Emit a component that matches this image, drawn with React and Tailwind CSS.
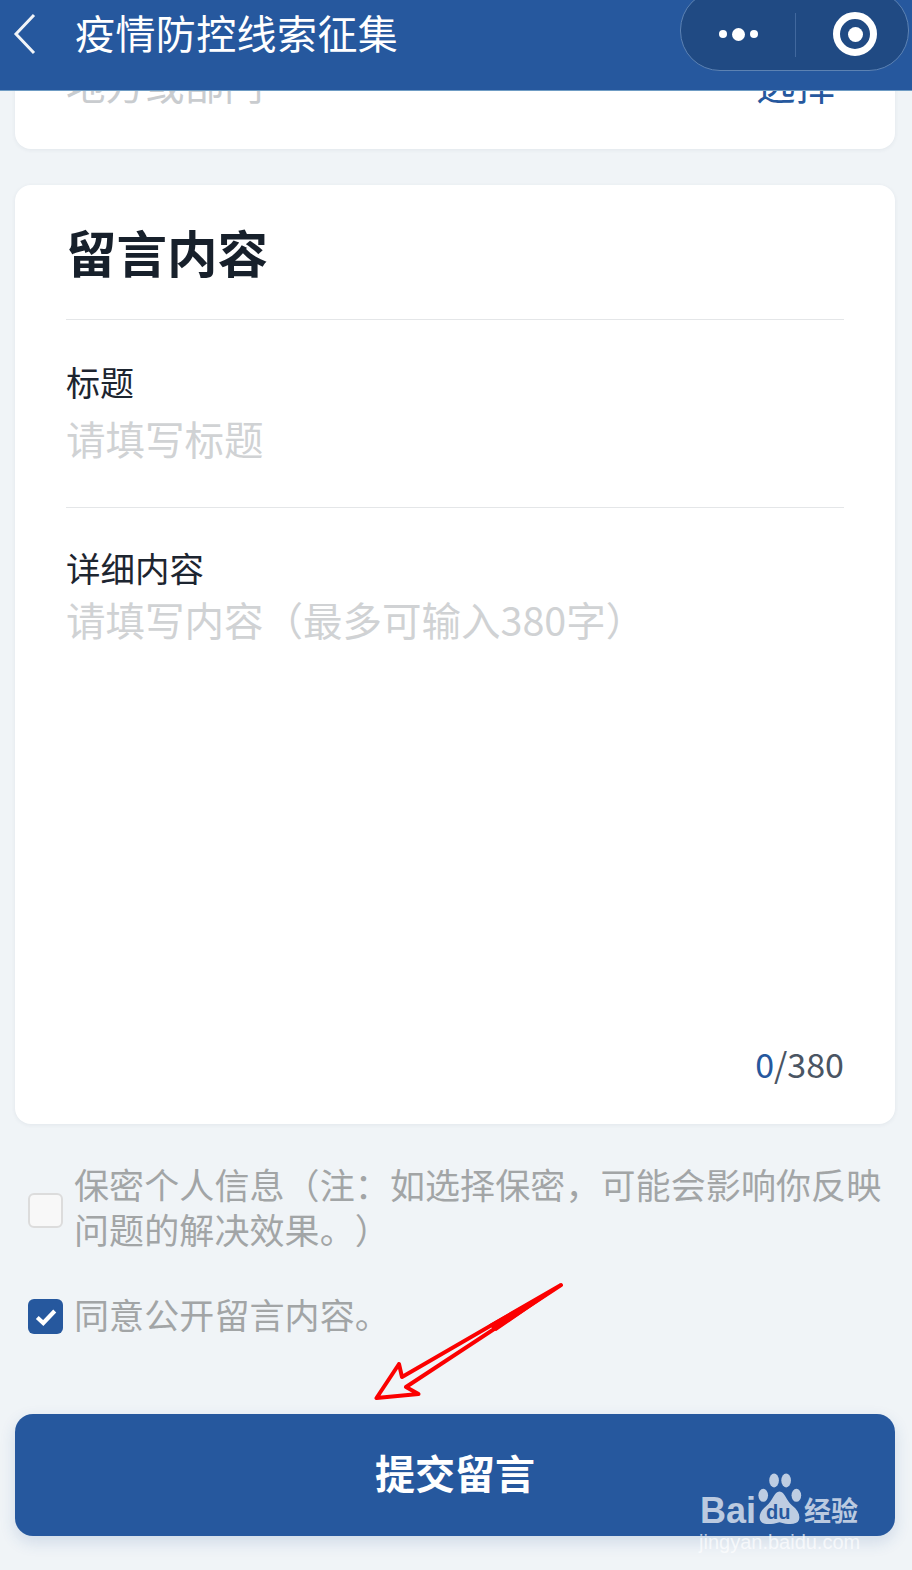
const App = () => {
  return (
    <div className="relative w-[912px] h-[1570px] overflow-hidden bg-[#f0f4f7] font-['Noto_Sans_CJK_SC','Noto_Sans',sans-serif] [text-spacing-trim:space-all]">
      {/* 顶部导航 */}
      <header className="relative z-10 h-[91px] bg-[#26589e] border-b border-[#6f9cc4] flex items-start text-white">
        <svg className="mt-[13px] ml-[12px] w-[26px] h-[42px]" viewBox="0 0 26 42" fill="none">
          <path d="M22 2 L4 21 L22 40" stroke="#f1f4f8" strokeWidth="3" />
        </svg>
        <h1 className="ml-[37px] mt-[2px] text-[40px] leading-[60px] tracking-[0.4px] whitespace-nowrap">疫情防控线索征集</h1>
        <div className="absolute left-[680px] top-[-10px] w-[229px] h-[81px] rounded-[40px] bg-[#204a83] border border-[#5c82b3] flex items-center pt-[10px]">
          <div className="w-[114px] flex items-center justify-center gap-[5px] pl-[1px] -mt-[3px]">
            <span className="w-[8px] h-[8px] rounded-full bg-white" />
            <span className="w-[13px] h-[13px] rounded-full bg-white" />
            <span className="w-[8px] h-[8px] rounded-full bg-white" />
          </div>
          <div className="w-px h-[44px] bg-[#41689e] -mt-[2px]" />
          <div className="flex-1 flex items-center justify-center pl-[6px] -mt-[3px]">
            <div className="w-[44px] h-[44px] rounded-full border-[7px] border-white flex items-center justify-center">
              <span className="w-[15px] h-[15px] rounded-full bg-white" />
            </div>
          </div>
        </div>
      </header>

      {/* 上一张卡片 */}
      <section className="relative ml-[15px] w-[880px] -mt-[31px] h-[89px] rounded-b-[16px] bg-white shadow-[0_1px_4px_rgba(40,60,90,0.07)] flex justify-between pl-[51px] pr-[60px] text-[39.5px] leading-[60px] overflow-hidden">
        <span className="text-[#c9cccf] -mt-[7px]">地方或部门</span>
        <span className="text-[#26589e] -mt-[7px]">选择</span>
      </section>

      {/* 留言内容 */}
      <section className="ml-[15px] w-[880px] mt-[36px] h-[939px] rounded-[16px] bg-white shadow-[0_1px_4px_rgba(40,60,90,0.07)] pl-[51px] pr-[51px] flex flex-col">
        <h2 className="h-[135px] border-b border-[#e4e6e8] text-[50.5px] leading-[72px] pt-[30px] font-bold text-[#17202b]">留言内容</h2>
        <div className="h-[188px] border-b border-[#e4e6e8] pt-[37px]">
          <p className="text-[34px] leading-[50px] text-[#1d2530]">标题</p>
          <p className="mt-[2px] text-[39.5px] leading-[58px] text-[#d0d2d4]">请填写标题</p>
        </div>
        <div className="flex-1 flex flex-col pt-[34px] pb-[35px]">
          <p className="text-[34.5px] leading-[50px] text-[#1d2530]">详细内容</p>
          <p className="-mt-[2px] text-[39.5px] leading-[58px] text-[#d0d2d4] whitespace-nowrap">请填写内容（最多可输入380字）</p>
          <p className="mt-auto text-right text-[34px] leading-[50px] text-[#4a5563]">
            <span className="text-[#26589e]">0</span>/380
          </p>
        </div>
      </section>

      {/* 选项 */}
      <div className="mt-[37px] pl-[28px] flex items-start gap-[11px]">
        <span className="shrink-0 mt-[32px] w-[35px] h-[35px] rounded-[6px] bg-[#f8f8f8] border-2 border-[#dcdcdc]" />
        <p className="w-[815px] text-[35px] leading-[45px] tracking-[0.1px] text-[#a2a5a6]">
          保密个人信息（注：如选择保密，可能会影响你反映问题的解决效果。）
        </p>
      </div>
      <div className="mt-[40px] pl-[28px] flex items-start gap-[11px]">
        <span className="shrink-0 mt-[8px] w-[35px] h-[35px] rounded-[6px] bg-[#26589e] flex items-center justify-center">
          <svg className="w-[24px] h-[20px]" viewBox="0 0 22 18" fill="none">
            <path d="M3 9.5 L8.5 14.5 L19 3.5" stroke="white" strokeWidth="3.8" />
          </svg>
        </span>
        <p className="text-[35px] leading-[45px] tracking-[0.1px] text-[#a2a5a6] whitespace-nowrap">同意公开留言内容。</p>
      </div>

      {/* 提交 */}
      <button className="block ml-[15px] mt-[78px] w-[880px] h-[122px] pb-[6px] rounded-[18px] bg-[#26589e] text-white text-[40px] font-bold shadow-[0_6px_16px_rgba(38,88,158,0.16)]">
        提交留言
      </button>

      {/* 红色箭头 */}
      <svg className="absolute left-[370px] top-[1280px] w-[196px] h-[122px]" viewBox="0 0 196 122" fill="none">
        <path
          d="M191 5 L32 97 L29 84 L6.5 118 L48.5 114 L36 107 Z"
          stroke="#fb0000"
          strokeWidth="4"
          strokeLinejoin="round"
          fill="#f0f4f7"
        />
        <path d="M191 5 L120 45 L126 50 Z" fill="#fb0000" stroke="#fb0000" strokeWidth="2" strokeLinejoin="round" />
      </svg>

      {/* 水印 */}
      <div className="absolute left-[668px] top-[1470px] w-[210px] h-[82px] text-white/70">
        <span className="absolute left-[32px] top-[21px] text-[36px] leading-[40px] font-bold font-['Liberation_Sans',sans-serif]">Bai</span>
        <svg className="absolute left-[88px] top-[3px] w-[47px] h-[52px]" viewBox="0 0 78 56" preserveAspectRatio="none" fill="currentColor">
          <ellipse cx="12" cy="24" rx="8" ry="7" />
          <ellipse cx="30" cy="8" rx="8" ry="7.5" />
          <ellipse cx="50" cy="8" rx="8" ry="7.5" />
          <ellipse cx="67" cy="24" rx="8" ry="7" />
          <path d="M39 20 C30 20 28 30 18 35 C8 40 4 46 7 51 C10 56 24 56 39 53 C54 56 68 56 71 51 C74 46 70 40 60 35 C50 30 48 20 39 20 Z" />
        </svg>
        <span className="absolute left-[98px] top-[31px] text-[20px] leading-[22px] font-bold text-[#26589e] font-['Liberation_Sans',sans-serif]">du</span>
        <span className="absolute left-[136px] top-[22px] text-[27px] leading-[36px] font-bold whitespace-nowrap">经验</span>
        <span className="absolute left-[31px] top-[60px] text-[20px] leading-[24px] whitespace-nowrap font-['Liberation_Sans',sans-serif]">jingyan.baidu.com</span>
      </div>
    </div>
  );
};

export default App;
